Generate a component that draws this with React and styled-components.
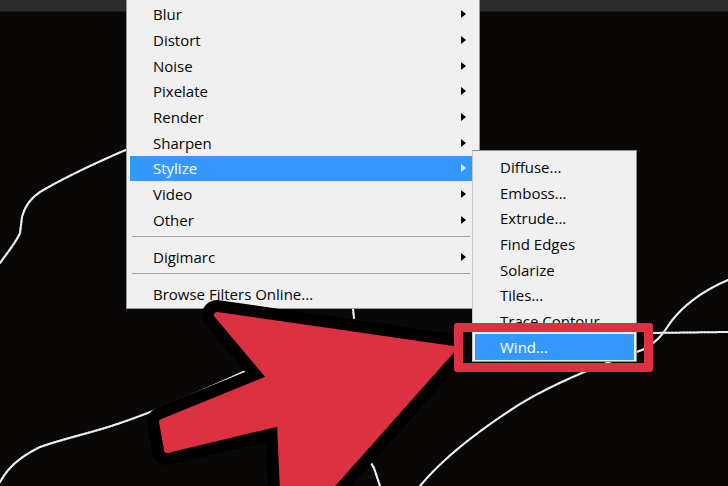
import React from "react";
import styled, { createGlobalStyle } from "styled-components";

// --- Global ---
const GlobalStyle = createGlobalStyle`
  html, body {
    margin: 0;
    padding: 0;
    background: #090807;
  }
  body {
    font-family: "Open Sans", "Noto Sans", "Liberation Sans", sans-serif;
  }
`;

// --- Canvas ---
const Stage = styled.div`
  position: relative;
  width: 728px;
  height: 486px;
  overflow: hidden;
  background: #090807;
`;

const TitleStrip = styled.div`
  height: 11px;
  background: #2c2c2c;
  border-bottom: 1px solid #1b1b1b;
`;

const Layer = styled.svg`
  position: absolute;
  left: 0;
  top: 0;
  width: 728px;
  height: 486px;
  pointer-events: none;
  z-index: ${({ $z }) => $z};
`;

// --- Menus ---
const MenuPanel = styled.div`
  position: absolute;
  left: 126px;
  top: 0;
  width: 354px;
  box-sizing: border-box;
  padding: 1.5px 3px 1px 3px;
  background: #f0f0f0;
  border: 1px solid #979797;
  border-top: none;
  z-index: 2;
`;

const SubPanel = styled.div`
  position: absolute;
  left: 472px;
  top: 150px;
  width: 165px;
  box-sizing: border-box;
  padding: 3px 2px 1px 2px;
  background: #f0f0f0;
  border: 1px solid #8e8e8e;
  border-left-color: #c9c9c9;
  z-index: 3;
`;

const Item = styled.div`
  display: flex;
  align-items: center;
  justify-content: space-between;
  height: 25.7px;
  box-sizing: border-box;
  padding: 0 10px 0 ${({ $indent }) => $indent}px;
  font-size: 15px;
  color: ${({ $active }) => ($active ? "#ffffff" : "#050505")};
  background: ${({ $active }) => ($active ? "#3399ff" : "transparent")};
  white-space: nowrap;
`;

const SubArrow = styled.span`
  width: 0;
  height: 0;
  border-top: 4.5px solid transparent;
  border-bottom: 4.5px solid transparent;
  border-left: 5px solid ${({ $active }) => ($active ? "#d6ebff" : "#000")};
`;

const Separator = styled.div`
  height: 1px;
  margin: 3.5px 6px 7px 2px;
  background: #a3a3a3;
`;

const HighlightBox = styled.div`
  position: absolute;
  left: 454px;
  top: 323px;
  width: 199px;
  height: 49px;
  box-sizing: border-box;
  border: 9px solid #dd3142;
  border-radius: 3px;
  z-index: 5;
`;

const mainGroups = [
  ["Blur", "Distort", "Noise", "Pixelate", "Render", "Sharpen", "Stylize", "Video", "Other"],
  ["Digimarc"],
];

const stylizeItems = [
  "Diffuse...", "Emboss...", "Extrude...", "Find Edges",
  "Solarize", "Tiles...", "Trace Contour", "Wind...",
];

// selection outline strokes on the dark canvas
const strokes = [
  "M0,263 C8,252 16,242 20,233 L22,217 C25,206 30,199 40,192 C62,179 95,163 128,149",
  "M0,482 C8,468 18,458 40,447 C60,440 85,434 105,428 C150,414 200,392 250,369",
  "M353,309 L354,318",
  "M358,446 C364,454 370,461 374,468 L380,486",
  "M420,486 C440,462 470,436 520,404 C560,380 605,363 642,350 C654,344 662,336 668,326 C680,308 700,292 728,280",
  "M650,333 L728,332",
];

function Backdrop() {
  return (
    <Layer $z={1} viewBox="0 0 728 486">
      {strokes.map((d, i) => (
        <g key={i} fill="none" strokeLinecap="round" strokeLinejoin="round">
          <path d={d} stroke="#6e6e6e" strokeWidth="2.2" />
          <path d={d} stroke="#f2f2f2" strokeWidth="2" strokeDasharray="2 1.6" />
        </g>
      ))}
    </Layer>
  );
}

const arrowPts = "217,315 453,349 285,538 280,423 167,450 162,422 270,378";

function BigArrow() {
  return (
    <Layer $z={4} viewBox="0 0 728 486">
      <polygon points={arrowPts} fill="#000" stroke="#000" strokeWidth="30" strokeLinejoin="round" />
      <polygon points={arrowPts} fill="#dd3142" stroke="#dd3142" strokeWidth="6" strokeLinejoin="round" />
    </Layer>
  );
}

export default function App() {
  return (
    <>
      <GlobalStyle />
      <Stage>
        <TitleStrip />
        <Backdrop />
        <MenuPanel>
          {mainGroups.map((group, gi) => (
            <React.Fragment key={gi}>
              {group.map((label) => (
                <Item key={label} $indent={23} $active={label === "Stylize"}>
                  {label}
                  <SubArrow $active={label === "Stylize"} />
                </Item>
              ))}
              <Separator />
            </React.Fragment>
          ))}
          <Item $indent={23}>Browse Filters Online...</Item>
        </MenuPanel>
        <SubPanel>
          {stylizeItems.map((label) => (
            <Item key={label} $indent={25} $active={label === "Wind..."}>
              {label}
            </Item>
          ))}
        </SubPanel>
        <BigArrow />
        <HighlightBox />
      </Stage>
    </>
  );
}
